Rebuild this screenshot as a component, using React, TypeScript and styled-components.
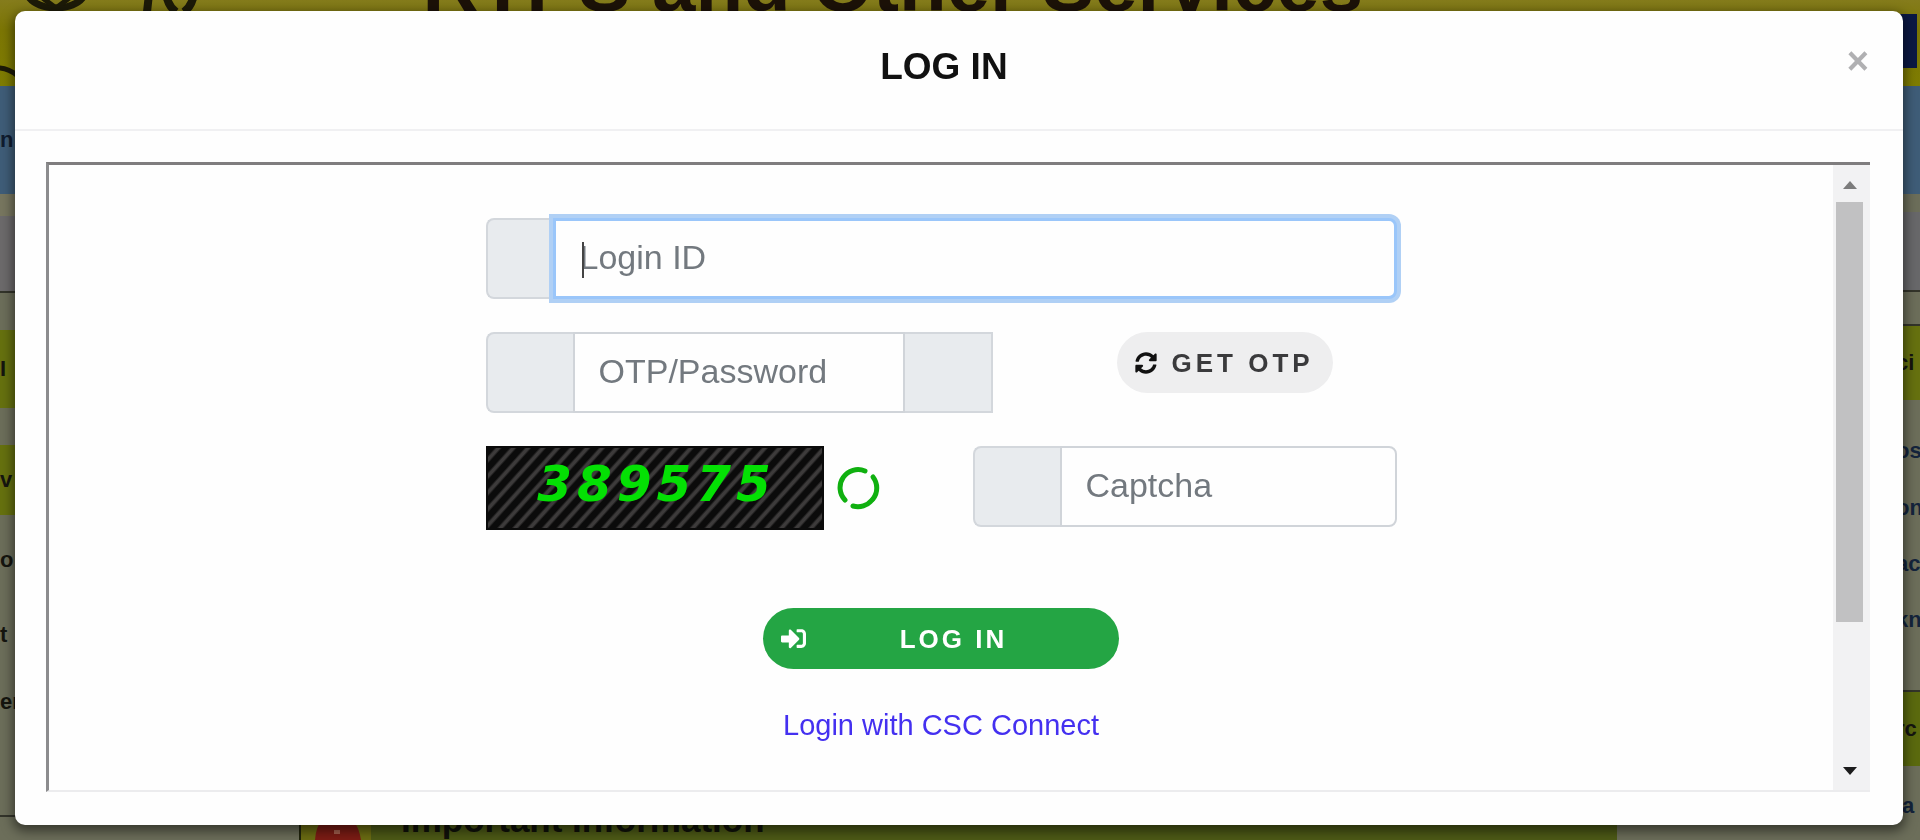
import React from "react";
import styled, { createGlobalStyle } from "styled-components";
import { FaSyncAlt, FaSignInAlt } from "react-icons/fa";

const sans = `"Liberation Sans", Arial, sans-serif`;

const GlobalStyle = createGlobalStyle`
  *, *::before, *::after { box-sizing: border-box; }
  body { margin: 0; font-family: ${sans}; background: #6c6e5a; overflow: hidden; }
  h1, h2, p { margin: 0; }
`;

/* ---------- dimmed page behind the dialog ---------- */

const Page = styled.div`
  height: 100vh;
  display: flex;
  flex-direction: column;
  overflow: hidden;
  color: #14120c;
`;

const SiteHeader = styled.header`
  flex: none;
  height: 86px;
  display: flex;
  background: linear-gradient(#857c1c, #7c7604 30px, #7f7d02);
`;

const Brand = styled.div`
  flex: 0 0 22%;
  display: flex;
  align-items: flex-start;
  gap: 46px;
  padding-left: 18px;
  overflow: hidden;
  height: 86px;
`;

const Emblem = styled.svg`
  width: 76px;
  height: 80px;
  flex: none;
  overflow: visible;
`;

const SiteTitle = styled.h1`
  flex: 1;
  margin-top: -60px;
  font-size: 78px;
  line-height: 88px;
  font-weight: bold;
  color: #1c1208;
  white-space: nowrap;
`;

const HeaderBadge = styled.div`
  flex: none;
  width: 24px;
  height: 54px;
  margin: 14px 3px 0 0;
  background: #0b1844;
`;

const NavBand = styled.div`
  flex: none;
  height: 108px;
  background: #3f5d78;
  font-size: 22px;
  line-height: 108px;
  font-weight: bold;
  color: #101c30;
`;

const Columns = styled.div`
  flex: 1;
  display: grid;
  grid-template-columns: 15px 1fr 24px;
  min-height: 0;
`;

const Side = styled.div`
  display: flex;
  flex-direction: column;
  overflow: hidden;
`;

const Strip = styled.div<{ $h: number; $bg?: string; $line?: boolean; $ink?: string }>`
  flex: none;
  height: ${(p) => p.$h}px;
  line-height: ${(p) => p.$h}px;
  background: ${(p) => p.$bg ?? "#6c6e5a"};
  border-bottom: ${(p) => (p.$line ? "2px solid #33342a" : "none")};
  color: ${(p) => p.$ink ?? "#15150f"};
  font-size: 22px;
  font-weight: bold;
  white-space: nowrap;
`;

const Centre = styled.div`
  display: flex;
  align-items: flex-end;
  min-width: 0;
  overflow: hidden;
`;

const NoticeBar = styled.div`
  flex: 1;
  height: 28px;
  margin: 0 279px 0 284px;
  display: flex;
  gap: 30px;
  background: #4d5a16;
  border-left: 2px solid #20240c;
  overflow: hidden;
`;

const NoticeTitle = styled.h2`
  margin-top: -10px;
  font-size: 35px;
  line-height: 36px;
  color: #10120a;
  white-space: nowrap;
`;

/* ---------- dialog ---------- */

const Overlay = styled.div`
  position: fixed;
  inset: 0;
  padding: 11px 17px 15px 15px;
  display: flex;
`;

const Dialog = styled.section`
  flex: 1;
  display: flex;
  flex-direction: column;
  min-width: 0;
  background: #fefefe;
  border-radius: 10px;
  box-shadow: 0 4px 12px 2px rgba(0, 0, 0, 0.5);
`;

const DialogHeader = styled.header`
  display: flex;
  align-items: center;
  height: 120px;
  padding: 0 32px 0 26px;
  border-bottom: 2px solid #f0f0f2;
`;

const DialogTitle = styled.h2`
  flex: 1;
  padding-bottom: 6px;
  font-size: 37px;
  line-height: 40px;
  font-weight: bold;
  text-align: center;
  color: #111;
`;

const CloseButton = styled.button`
  margin-bottom: 18px;
  padding: 0 2px 0 0;
  border: 0;
  background: none;
  font: bold 38px/40px ${sans};
  color: #b0b0b2;
`;

const Frame = styled.div`
  flex: 1;
  display: flex;
  margin: 31px 33px 33px 31px;
  border-style: solid;
  border-width: 3px 0 2px 3px;
  border-color: #7f7d7e #eee #ececee #8c8c8e;
  min-height: 0;
`;

const Form = styled.form`
  flex: 1;
  display: flex;
  flex-direction: column;
  align-items: center;
  padding-top: 53px;
  min-width: 0;
`;

const Fields = styled.div`
  width: 911px;
  max-width: 100%;
  display: flex;
  flex-direction: column;
`;

const Row = styled.div<{ $gap: number }>`
  display: flex;
  align-items: flex-start;
  justify-content: space-between;
  margin-bottom: ${(p) => p.$gap}px;
`;

const Group = styled.div<{ $width?: string }>`
  position: relative;
  display: flex;
  height: 81px;
  width: ${(p) => p.$width ?? "100%"};
`;

const Addon = styled.span<{ $width: number; $end?: boolean }>`
  flex: none;
  width: ${(p) => p.$width}px;
  background: #e8ebee;
  border: 2px solid #d3d7dc;
  border-radius: ${(p) => (p.$end ? "0" : "8px 0 0 8px")};
  border-${(p) => (p.$end ? "left" : "right")}-width: 0;
`;

const Field = styled.input<{ $active?: boolean; $square?: boolean }>`
  flex: 1;
  min-width: 0;
  padding: 0 24px 4px;
  font: 34px/40px ${sans};
  color: #495057;
  background: #fefefe;
  outline: none;
  border: ${(p) => (p.$active ? "3px solid #9ac6fa" : "2px solid #d0d4d9")};
  border-radius: ${(p) => (p.$square ? "0" : "0 8px 8px 0")};
  box-shadow: ${(p) => (p.$active ? "0 0 0 4px #b0d0f5" : "none")};
  &::placeholder { color: #73797f; opacity: 1; }
`;

const Caret = styled.span`
  position: absolute;
  left: 96px;
  top: 24px;
  width: 2px;
  height: 36px;
  background: #444;
`;

const Pill = styled.button`
  display: flex;
  align-items: center;
  height: 61px;
  padding: 0 18px;
  border: 0;
  border-radius: 31px;
  font: bold 26px/32px ${sans};
  white-space: nowrap;
  svg { flex: none; }
`;

const OtpButton = styled(Pill)`
  width: 216px;
  margin-right: 64px;
  gap: 15px;
  letter-spacing: 4px;
  color: #3a3a3c;
  background: #eeeeef;
`;

const LoginButton = styled(Pill)`
  width: 356px;
  letter-spacing: 3px;
  color: #fff;
  background: #24a544;
`;

const PillText = styled.span`
  flex: 1;
  text-align: center;
`;

const CaptchaBox = styled.div`
  display: flex;
  align-items: center;
  gap: 13px;
`;

const CaptchaImage = styled.div`
  width: 338px;
  height: 84px;
  padding: 0 0 8px 4px;
  display: flex;
  align-items: center;
  justify-content: center;
  background: repeating-linear-gradient(-48deg, #0b0b0b 0 5px, #3d3b3b 7px 9px, #0b0b0b 11px);
  border: 2px solid #0b0b0b;
  font: italic bold 50px/56px "DejaVu Sans", sans-serif;
  letter-spacing: 5px;
  color: #04e004;
`;

const RefreshButton = styled.button`
  padding: 0;
  border: 0;
  background: none;
  display: flex;
`;

const CscLink = styled.a`
  margin-top: 38px;
  font-size: 29px;
  line-height: 36px;
  color: #4430f0;
  text-decoration: none;
`;

const Scrollbar = styled.div`
  flex: none;
  width: 37px;
  padding: 15px 7px 14px 3px;
  display: flex;
  flex-direction: column;
  align-items: center;
  background: #f2f2f3;
`;

const Arrow = styled.svg`
  flex: none;
  width: 16px;
  height: 10px;
`;

const Track = styled.div`
  flex: 1;
  width: 100%;
  margin: 12px 0;
`;

const Thumb = styled.div`
  height: 76%;
  background: #c1c1c2;
`;

export default function App() {
  return (
    <>
      <GlobalStyle />
      <Page aria-hidden="true">
        <SiteHeader>
          <Brand>
            <Emblem viewBox="0 0 76 80">
              <path d="M8 -8 Q14 7 38 8 Q62 7 68 -8" fill="none" stroke="#1c1a08" strokeWidth="7" />
              <path d="M22 -4 L38 8 L54 -4" fill="none" stroke="#1c1a08" strokeWidth="5" />
              <path d="M-20 68 Q-10 68 0 76" fill="none" stroke="#1c1a08" strokeWidth="5" />
            </Emblem>
            <Emblem viewBox="0 0 76 80">
              <path d="M9 -6 L7 12 M26 -6 Q28 6 36 12 M54 -6 Q52 6 44 12" fill="none" stroke="#1c1a08" strokeWidth="8" />
            </Emblem>
          </Brand>
          <SiteTitle>RTPS and Other Services</SiteTitle>
          <HeaderBadge />
        </SiteHeader>
        <NavBand>n</NavBand>
        <Columns>
          <Side>
            <Strip $h={22} $bg="#77765f" />
            <Strip $h={77} $bg="#6c6a6b" $line />
            <Strip $h={37} />
            <Strip $h={78} $bg="#66710f">I</Strip>
            <Strip $h={37} />
            <Strip $h={70} $bg="#66710f">v</Strip>
            <Strip $h={90}>o</Strip>
            <Strip $h={60}>t</Strip>
            <Strip $h={74}>er</Strip>
            <Strip $h={78} $line />
          </Side>
          <Centre>
            <NoticeBar>
              <svg width="70" height="28" viewBox="0 0 70 28">
                <path d="M0 0H70V28H0Z" fill="#6b6c12" />
                <path d="M14 28 Q16 2 36 2 Q56 2 60 28Z" fill="#7c1c14" />
                <path d="M33 18h6v4h-6z" fill="#a4604e" />
              </svg>
              <NoticeTitle>Important Information</NoticeTitle>
            </NoticeBar>
          </Centre>
          <Side>
            <Strip $h={18} />
            <Strip $h={80} $bg="#68686a" $line />
            <Strip $h={34} $line />
            <Strip $h={74} $bg="#66710f">ci</Strip>
            <Strip $h={22} />
            <Strip $h={58} $ink="#14243c">os</Strip>
            <Strip $h={56} $ink="#14243c">on</Strip>
            <Strip $h={56} $ink="#14243c">ac</Strip>
            <Strip $h={56} $ink="#14243c">kn</Strip>
            <Strip $h={44} $line />
            <Strip $h={74} $bg="#5b6a0e">rc</Strip>
            <Strip $h={80} $ink="#14243c">la</Strip>
          </Side>
        </Columns>
      </Page>

      <Overlay>
        <Dialog role="dialog" aria-modal="true" aria-labelledby="login-title">
          <DialogHeader>
            <DialogTitle id="login-title">LOG IN</DialogTitle>
            <CloseButton type="button" aria-label="Close">×</CloseButton>
          </DialogHeader>
          <Frame>
            <Form onSubmit={(e) => e.preventDefault()}>
              <Fields>
                <Row $gap={33}>
                  <Group>
                    <Addon $width={67} />
                    <Field $active type="text" placeholder="Login ID" aria-label="Login ID" />
                    <Caret />
                  </Group>
                </Row>
                <Row $gap={33}>
                  <Group $width="507px">
                    <Addon $width={87} />
                    <Field $square type="password" placeholder="OTP/Password" aria-label="OTP/Password" />
                    <Addon $width={88} $end />
                  </Group>
                  <OtpButton type="button">
                    <FaSyncAlt size={22} color="#111" />
                    GET OTP
                  </OtpButton>
                </Row>
                <Row $gap={78}>
                  <CaptchaBox>
                    <CaptchaImage>389575</CaptchaImage>
                    <RefreshButton type="button" aria-label="New captcha">
                      <svg width="44" height="44" viewBox="0 0 44 44" fill="none" stroke="#10b010" strokeWidth="5" strokeLinecap="round">
                        <path d="M8 34 A18 18 0 0 1 28 5" />
                        <path d="M36 11 A18 18 0 0 1 36 33" />
                        <path d="M35 34 A18 18 0 0 1 16 40" />
                      </svg>
                    </RefreshButton>
                  </CaptchaBox>
                  <Group $width="424px">
                    <Addon $width={87} />
                    <Field type="text" placeholder="Captcha" aria-label="Captcha" />
                  </Group>
                </Row>
              </Fields>
              <LoginButton type="submit">
                <FaSignInAlt size={25} />
                <PillText>LOG IN</PillText>
              </LoginButton>
              <CscLink href="#csc">Login with CSC Connect</CscLink>
            </Form>
            <Scrollbar>
              <Arrow viewBox="0 0 16 10"><path d="M1 9L8 1L15 9Z" fill="#7c7c7c" /></Arrow>
              <Track><Thumb /></Track>
              <Arrow viewBox="0 0 16 10"><path d="M1 1L8 9L15 1Z" fill="#1c1c1c" /></Arrow>
            </Scrollbar>
          </Frame>
        </Dialog>
      </Overlay>
    </>
  );
}
